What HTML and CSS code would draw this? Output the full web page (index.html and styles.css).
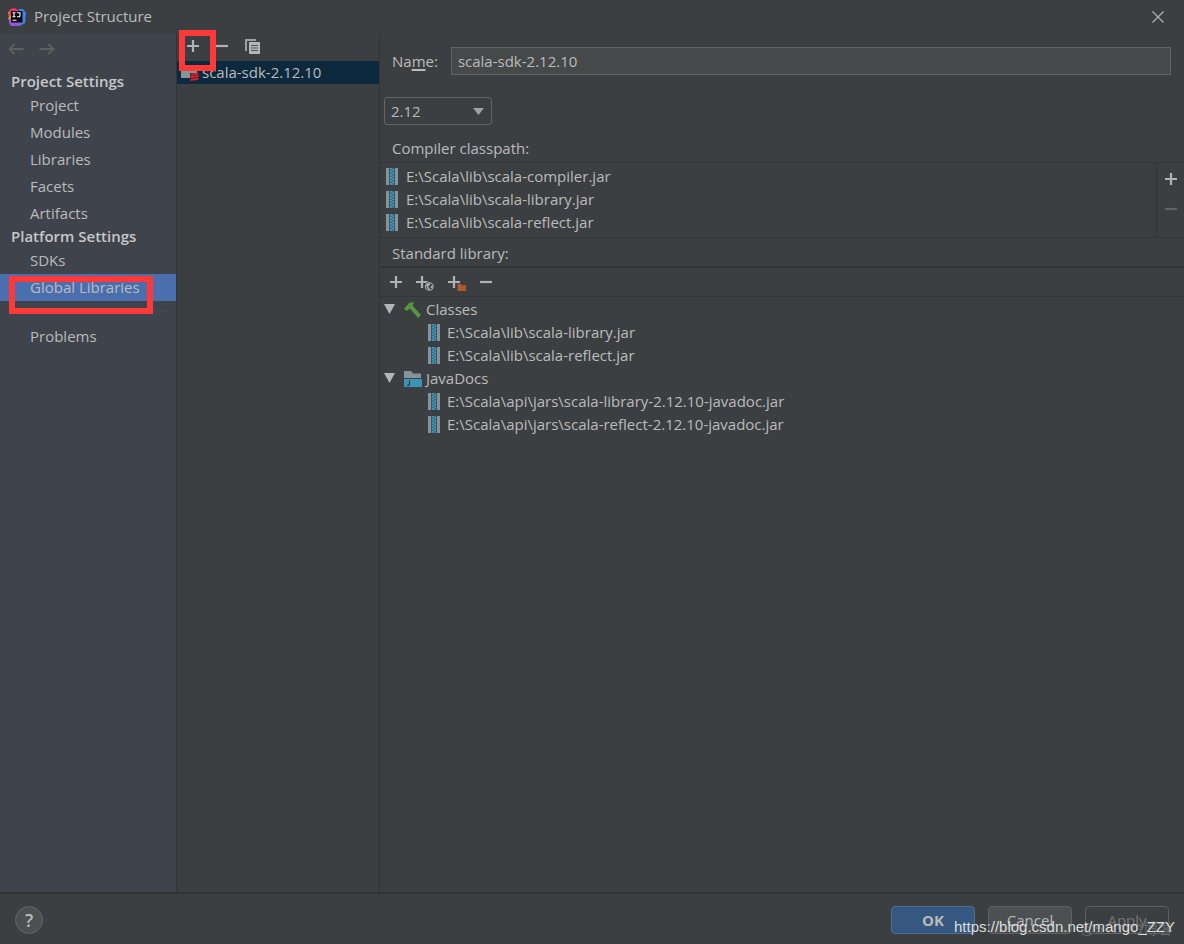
FILE: index.html
```html
<!DOCTYPE html>
<html lang="en">
<head>
<meta charset="utf-8">
<title>Project Structure</title>
<link rel="stylesheet" href="styles.css">
</head>
<body>
<svg class="defs" aria-hidden="true">
  <defs>
    <symbol id="plus" viewBox="0 0 12 12"><path d="M6 0v12M0 6h12" stroke="currentColor" stroke-width="2.200"/></symbol>
    <symbol id="minus" viewBox="0 0 12 12"><path d="M0 6h12" stroke="currentColor" stroke-width="2.200"/></symbol>
    <symbol id="arrow" viewBox="0 0 16 12"><path d="M15.500 6H1.500M6.500 1L1.500 6l5 5" fill="none" stroke="currentColor" stroke-width="1.900"/></symbol>
    <symbol id="triangle" viewBox="0 0 11 10"><path d="M0 0h11L5.500 10z" fill="currentColor"/></symbol>
    <symbol id="jar" viewBox="0 0 12 17">
      <path fill="#87939a" d="M0 0h3v17H0zM9 0h3v17H9z"/>
      <path fill="#346f86" d="M3.500 0h5v17h-5z"/>
      <path fill="none" stroke="#49a9cc" stroke-width="1.500" stroke-dasharray="1.500 1.500" d="M5 0v17"/>
      <path fill="none" stroke="#49a9cc" stroke-width="1.500" stroke-dasharray="1.500 1.500" stroke-dashoffset="1.500" d="M7.200 0v17"/>
    </symbol>
  </defs>
</svg>
<div class="window">
  <header class="titlebar">
    <svg class="logo" viewBox="0 0 18 18" aria-hidden="true">
      <path fill="#f28b38" d="M0 4l5-3 4 3-6 9-3-2 1-2z"/>
      <path fill="#ef2f68" d="M2 1l5-1 4 3-2 8-8-4z"/>
      <path fill="#3e83f0" d="M11 1l4 0 3 4-1 10-5 3-4-3z"/>
      <path fill="#9457d8" d="M1 11l5 2 7 2-2 3-8 0-2-3z"/>
      <path fill="#08050b" d="M3 3h11.500v11.500H3z"/>
      <path fill="none" stroke="#fff" stroke-width="1.100" d="M4.500 4.800h3M6 4.800v4M4.500 8.800h3M9 4.800h3v3q0 1-1.200 1H9M4.500 12.300h4"/>
    </svg>
    <h1 class="title">Project Structure</h1>
    <button class="icon-button close" aria-label="Close">
      <svg viewBox="0 0 12 12"><path d="M.5.5l11 11M11.500.5l-11 11" stroke="currentColor" stroke-width="1.200"/></svg>
    </button>
  </header>

  <main class="body">
    <nav class="sidebar" aria-label="Settings">
      <div class="history">
        <button class="icon-button" aria-label="Back" disabled><svg class="arrow"><use href="#arrow"/></svg></button>
        <button class="icon-button" aria-label="Forward" disabled><svg class="arrow forward"><use href="#arrow"/></svg></button>
      </div>
      <h2 class="section">Project Settings</h2>
      <a class="nav-item" href="#project">Project</a>
      <a class="nav-item" href="#modules">Modules</a>
      <a class="nav-item" href="#libraries">Libraries</a>
      <a class="nav-item" href="#facets">Facets</a>
      <a class="nav-item" href="#artifacts">Artifacts</a>
      <h2 class="section">Platform Settings</h2>
      <a class="nav-item" href="#sdks">SDKs</a>
      <a class="nav-item selected" href="#global" aria-current="page">Global Libraries<span class="marker marker-nav"></span></a>
      <hr class="divider">
      <a class="nav-item" href="#problems">Problems</a>
    </nav>

    <section class="library-list" aria-label="Global libraries">
      <div class="toolbar list-toolbar">
        <button class="icon-button" aria-label="Add"><svg class="sign"><use href="#plus"/></svg></button>
        <button class="icon-button" aria-label="Remove"><svg class="sign"><use href="#minus"/></svg></button>
        <button class="icon-button" aria-label="Copy">
          <svg class="copy" viewBox="0 0 15 15"><path fill="#9da0a2" d="M0 0h11v2H2v10H0z"/><path fill="#b3b5b6" d="M4 3h11v12H4z"/><path stroke="#505355" stroke-width="1.200" d="M6 6.500h7M6 9h7M6 11.500h7"/></svg>
        </button>
        <span class="marker marker-add"></span>
      </div>
      <a class="library selected-library" href="#scala-sdk">
        <svg class="scala" viewBox="0 0 18 16" aria-hidden="true"><path fill="#87939a" d="M0 1h7l2 2h7v5H9v5H0z"/><path fill="none" stroke="#d8232b" stroke-width="2" d="M9.500 9.700l8-1.200M9.500 12.300l8-1.200M9.500 14.900l8-1.200"/></svg>
        <span>scala-sdk-2.12.10</span>
      </a>
    </section>

    <section class="details" aria-label="Library details">
      <div class="name-row">
        <label for="name">Na<u>m</u>e:</label>
        <input id="name" type="text" value="scala-sdk-2.12.10">
      </div>
      <div class="version">
        <select aria-label="Scala version"><option>2.12</option></select>
        <svg class="caret" viewBox="0 0 11 7" aria-hidden="true"><path fill="#9da2a5" d="M0 0h11L5.500 7z"/></svg>
      </div>
      <h3 class="caption">Compiler classpath:</h3>
      <div class="classpath">
        <ul class="files">
          <li class="row"><svg class="jar"><use href="#jar"/></svg>E:\Scala\lib\scala-compiler.jar</li>
          <li class="row"><svg class="jar"><use href="#jar"/></svg>E:\Scala\lib\scala-library.jar</li>
          <li class="row"><svg class="jar"><use href="#jar"/></svg>E:\Scala\lib\scala-reflect.jar</li>
        </ul>
        <div class="side-tools">
          <button class="icon-button" aria-label="Add to classpath"><svg class="sign"><use href="#plus"/></svg></button>
          <button class="icon-button" aria-label="Remove from classpath" disabled><svg class="sign"><use href="#minus"/></svg></button>
        </div>
      </div>
      <h3 class="caption standard">Standard library:</h3>
      <div class="toolbar root-toolbar">
        <button class="icon-button" aria-label="Add root"><svg class="sign"><use href="#plus"/></svg></button>
        <button class="icon-button" aria-label="Add URL">
          <svg class="combo" viewBox="0 0 18 18"><path d="M6 3v12M0 9h12" stroke="currentColor" stroke-width="2.200"/><circle cx="13.300" cy="13.500" r="5" fill="#3c3f41"/><circle cx="13.300" cy="13.500" r="3.800" fill="none" stroke="#b0b2b3" stroke-width="1.100"/><path fill="#b0b2b3" d="M10 12l3-2.300 1.500 1.800-2 1.200v1.500l1.800 2-2 .5zM15 13l2-.5-1 3-1.500-1z"/></svg>
        </button>
        <button class="icon-button" aria-label="Add folder">
          <svg class="combo" viewBox="0 0 18 18"><path d="M6 3v12M0 9h12" stroke="currentColor" stroke-width="2.200"/><path fill="#3c3f41" d="M8.500 10H18v8H8.500z"/><path fill="#b15a2c" d="M9.500 11h3.500l1 1.300h4V18H9.500z"/></svg>
        </button>
        <button class="icon-button" aria-label="Remove root"><svg class="sign"><use href="#minus"/></svg></button>
      </div>
      <ul class="tree">
        <li>
          <div class="row group"><svg class="triangle"><use href="#triangle"/></svg><svg class="kind" viewBox="0 0 18 16" aria-hidden="true"><path fill="#57963d" d="M0 7L5.500.5H10L8.500 3.500 17 13 14.200 16 5.800 6.500 3 9z"/></svg>Classes</div>
          <ul class="files nested">
            <li class="row"><svg class="jar"><use href="#jar"/></svg>E:\Scala\lib\scala-library.jar</li>
            <li class="row"><svg class="jar"><use href="#jar"/></svg>E:\Scala\lib\scala-reflect.jar</li>
          </ul>
        </li>
        <li>
          <div class="row group"><svg class="triangle"><use href="#triangle"/></svg><svg class="kind" viewBox="0 0 18 16" aria-hidden="true"><path fill="#87939a" d="M0 0h7l2 2.500h8V7H0z"/><path fill="#3b94b5" d="M0 8h18v8H0z"/><path fill="none" stroke="#263f4b" stroke-width="1.200" d="M5.500 9.500v3.500q0 1.300-1.300 1.300H3"/></svg>JavaDocs</div>
          <ul class="files nested">
            <li class="row"><svg class="jar"><use href="#jar"/></svg>E:\Scala\api\jars\scala-library-2.12.10-javadoc.jar</li>
            <li class="row"><svg class="jar"><use href="#jar"/></svg>E:\Scala\api\jars\scala-reflect-2.12.10-javadoc.jar</li>
          </ul>
        </li>
      </ul>
    </section>
  </main>

  <footer class="footer">
    <button class="help" aria-label="Help">?</button>
    <div class="actions">
      <button class="button primary">OK</button>
      <button class="button">Cancel</button>
      <button class="button" disabled>Apply</button>
    </div>
    <span class="watermark source">@51CTO博客</span>
    <span class="watermark">https://blog.csdn.net/mango_ZZY</span>
  </footer>
</div>
</body>
</html>
```

FILE: styles.css
```css
* { box-sizing: border-box; }

body {
  margin: 0;
  background: #3c3f41;
  color: #bbbbbb;
  font-family: "Open Sans", "Noto Sans CJK SC", sans-serif;
  font-size: 15px;
  line-height: 23px;
}

h1, h2, h3, ul { margin: 0; padding: 0; font-size: inherit; font-weight: normal; }
ul { list-style: none; }
a { color: inherit; text-decoration: none; }
button, input, select { font: inherit; color: inherit; }
svg { flex: none; display: block; }
.defs { position: absolute; width: 0; height: 0; }

.window { display: flex; flex-direction: column; min-height: 100vh; }

.icon-button {
  display: flex;
  align-items: center;
  justify-content: center;
  padding: 0;
  border: 0;
  background: none;
  color: #b0b2b3;
}
.icon-button:disabled { color: #616263; }
.sign { width: 12px; height: 12px; }

.titlebar { display: flex; align-items: center; height: 33px; padding: 0 20px 0 8px; }
.logo { width: 18px; height: 18px; }
.title { margin-left: 8px; }
.close { margin-left: auto; }
.close svg { width: 12px; height: 12px; }

.body { display: flex; flex: 1; }

.sidebar {
  width: 177px;
  flex: none;
  background: #3f434c;
  border-right: 1px solid #323436;
}
.history { display: flex; gap: 15px; height: 39px; padding: 0 0 7px 8px; }
.history .icon-button:disabled { color: #5e605f; }
.arrow { width: 16px; height: 12px; }
.forward { transform: scaleX(-1); }
.section { padding: 0 0 2px 11px; font-weight: 600; line-height: 18px; color: #c8c8c8; }
.nav-item { display: block; position: relative; padding-left: 30px; line-height: 27px; }
.selected { background: #4b6eaf; }
.divider { height: 1px; margin: 10px 8px 11px; border: 0; background: #444850; }

.marker { position: absolute; border: 6px solid #ff3838; pointer-events: none; }
.marker-nav { left: 9px; top: 2px; width: 144px; height: 38px; z-index: 1; }
.marker-add { left: 2px; top: -3px; width: 37px; height: 41px; z-index: 1; }

.library-list { width: 203px; flex: none; border-right: 1px solid #323436; }
.toolbar { display: flex; align-items: center; }
.list-toolbar { position: relative; gap: 17px; height: 28px; padding: 0 0 2px 10px; }
.copy { width: 15px; height: 15px; }
.library { display: flex; align-items: center; gap: 3px; padding-left: 4px; }
.selected-library { background: #0d293e; }
.scala { width: 18px; height: 16px; }

.details { flex: 1; min-width: 0; }
.name-row { display: flex; align-items: center; gap: 13px; padding: 14px 13px 0 12px; }
.name-row u { text-underline-offset: 2px; text-decoration-thickness: 2px; }
.name-row input {
  flex: 1;
  min-width: 0;
  height: 28px;
  padding: 0 6px;
  border: 1px solid #646464;
  background: #45494a;
}
.version { position: relative; width: 108px; margin: 22px 0 0 4px; }
.version select {
  display: block;
  appearance: none;
  width: 100%;
  height: 28px;
  padding: 0 6px;
  border: 1px solid #646464;
  border-radius: 3px;
  background: #3c3f41;
}
.caret { position: absolute; right: 8px; top: 11px; width: 11px; height: 7px; pointer-events: none; }
.caption { padding: 12px 12px 2px; }

.classpath { display: flex; border: solid #323436; border-width: 1px 0; }
.classpath .files { flex: 1; padding: 2px 0 3px 6px; }
.row { display: flex; align-items: center; gap: 8px; }
.jar { width: 12px; height: 17px; }
.side-tools {
  display: flex;
  flex-direction: column;
  gap: 18px;
  width: 28px;
  padding-top: 10px;
  border-left: 1px solid #323436;
}
.standard { padding: 4px 12px 1px; }
.root-toolbar {
  gap: 14px;
  height: 31px;
  padding-left: 10px;
  border-top: 2px solid #323436;
  border-bottom: 1px solid #323436;
}
.combo { width: 18px; height: 18px; }
.tree { padding: 1px 0 0 4px; }
.group { gap: 4px; }
.triangle { width: 11px; height: 10px; margin: 0 5px 2px 0; color: #b5b5b5; }
.kind { width: 18px; height: 16px; }
.nested { padding-left: 44px; }
.nested .row { gap: 7px; }

.footer {
  position: relative;
  display: flex;
  align-items: center;
  justify-content: space-between;
  height: 52px;
  padding: 2px 15px;
  padding-bottom: 0;
  border-top: 2px solid #313335;
}
.help {
  width: 28px;
  height: 28px;
  padding: 0;
  border: 1px solid #646768;
  border-radius: 50%;
  background: #4c5052;
  font-size: 18px;
  font-weight: 600;
  line-height: 24px;
}
.actions { display: flex; gap: 13px; }
.button {
  width: 84px;
  height: 28px;
  padding: 0;
  border: 1px solid #5e6060;
  border-radius: 4px;
  background: #4c5052;
}
.button:disabled { background: none; color: #777777; }
.primary { border-color: #4c708c; background: #365880; font-weight: bold; }
.watermark {
  position: absolute;
  right: 9px;
  bottom: 6px;
  color: #dedede;
  font-family: "Liberation Sans", Arial, sans-serif;
  line-height: 23px;
  pointer-events: none;
}
.source { right: 11px; bottom: 4px; color: #66696b; font-family: "Liberation Sans", "Noto Sans CJK SC", sans-serif; }
```
